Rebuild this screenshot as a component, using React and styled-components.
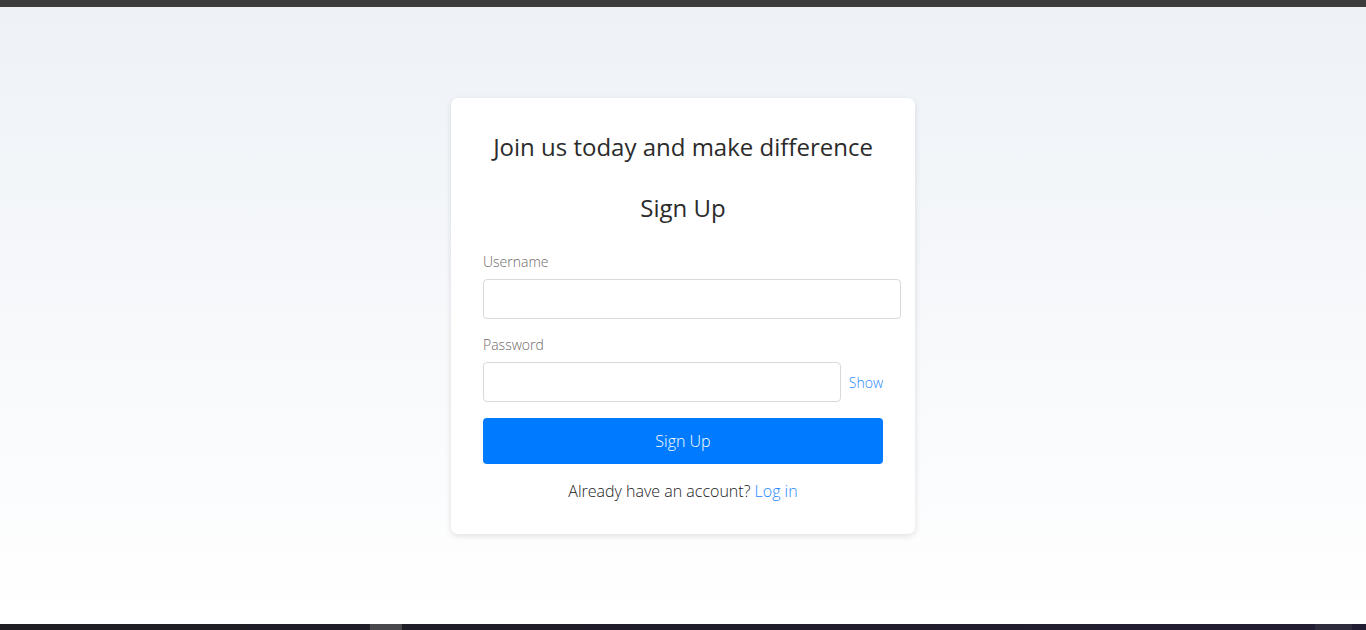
import React, { useState } from 'react';
import styled, { createGlobalStyle } from 'styled-components';

const GlobalStyle = createGlobalStyle`
  body {
    margin: 0;
    font-family: "Open Sans", "Noto Sans", sans-serif;
    color: #333;
  }
  * { box-sizing: border-box; }
`;

const Page = styled.div`
  display: flex;
  flex-direction: column;
  height: 630px;
  overflow: hidden;
`;

const TopBar = styled.div`
  height: 7px;
  background: #3c3c3c;
`;

const Main = styled.main`
  flex: 1;
  display: flex;
  justify-content: center;
  align-items: flex-start;
  padding-top: 91px;
  background: linear-gradient(180deg, #eef2f7 0%, #ffffff 100%);
`;

const Card = styled.div`
  width: 464px;
  padding: 32px 32px 31px;
  background: #fff;
  border-radius: 7px;
  box-shadow: 0 2px 6px rgba(0, 0, 0, 0.12);
`;

const Title = styled.h2`
  margin: 0 0 ${p => p.gap || 0}px;
  font-size: 24px;
  line-height: 34px;
  font-weight: 400;
  text-align: center;
  color: #2b2b2b;
`;

const Field = styled.div`
  display: flex;
  flex-direction: column;
  gap: 7px;
  margin-bottom: 16px;
`;

const Label = styled.label`
  font-size: 14px;
  line-height: 20px;
  font-weight: 300;
  color: #6f6a68;
`;

const Input = styled.input`
  width: ${p => p.w}px;
  height: 40px;
  padding: 0 12px;
  border: 1px solid #d9d9d9;
  border-radius: 4px;
  font-family: inherit;
  font-size: 15px;
  outline: none;
`;

const Row = styled.div`
  display: flex;
  align-items: center;
  gap: 8px;
`;

const ShowToggle = styled.button`
  border: none;
  background: none;
  padding: 0;
  font-family: inherit;
  font-size: 14px;
  font-weight: 300;
  color: #1e88ff;
  cursor: pointer;
`;

const SubmitButton = styled.button`
  width: 100%;
  height: 46px;
  border: none;
  border-radius: 4px;
  background: #007bff;
  color: #fff;
  font-family: inherit;
  font-size: 16px;
  font-weight: 300;
  cursor: pointer;
`;

const Footer = styled.p`
  margin: 15px 0 0;
  font-size: 16px;
  line-height: 24px;
  font-weight: 300;
  text-align: center;
  color: #222;
`;

const LoginLink = styled.a`
  color: #1e88ff;
  text-decoration: none;
`;

const Taskbar = styled.div`
  height: 6px;
  display: flex;
  background: linear-gradient(90deg, #1f1e23 0%, #201d2a 50%, #231d33 100%);
`;

const TaskSegment = styled.div`
  width: ${p => p.w}px;
  margin-left: ${p => p.offset || 0}px;
  background: ${p => p.bg};
`;

const SignUp = () => {
  const [showPassword, setShowPassword] = useState(false);

  return (
    <Card>
      <Title gap={27}>Join us today and make difference</Title>
      <Title gap={27}>Sign Up</Title>
      <Field>
        <Label htmlFor="username">Username</Label>
        <Input id="username" type="text" w={418} />
      </Field>
      <Field>
        <Label htmlFor="password">Password</Label>
        <Row>
          <Input id="password" type={showPassword ? 'text' : 'password'} w={358} />
          <ShowToggle type="button" onClick={() => setShowPassword(!showPassword)}>
            {showPassword ? 'Hide' : 'Show'}
          </ShowToggle>
        </Row>
      </Field>
      <SubmitButton type="button">Sign Up</SubmitButton>
      <Footer>
        Already have an account? <LoginLink href="#">Log in</LoginLink>
      </Footer>
    </Card>
  );
};

export default function App() {
  return (
    <>
      <GlobalStyle />
      <Page>
        <TopBar />
        <Main>
          <SignUp />
        </Main>
        <Taskbar>
          <TaskSegment offset={370} w={32} bg="#48474c" />
          <TaskSegment offset={913} w={37} bg="#2e2b3c" />
        </Taskbar>
      </Page>
    </>
  );
}
